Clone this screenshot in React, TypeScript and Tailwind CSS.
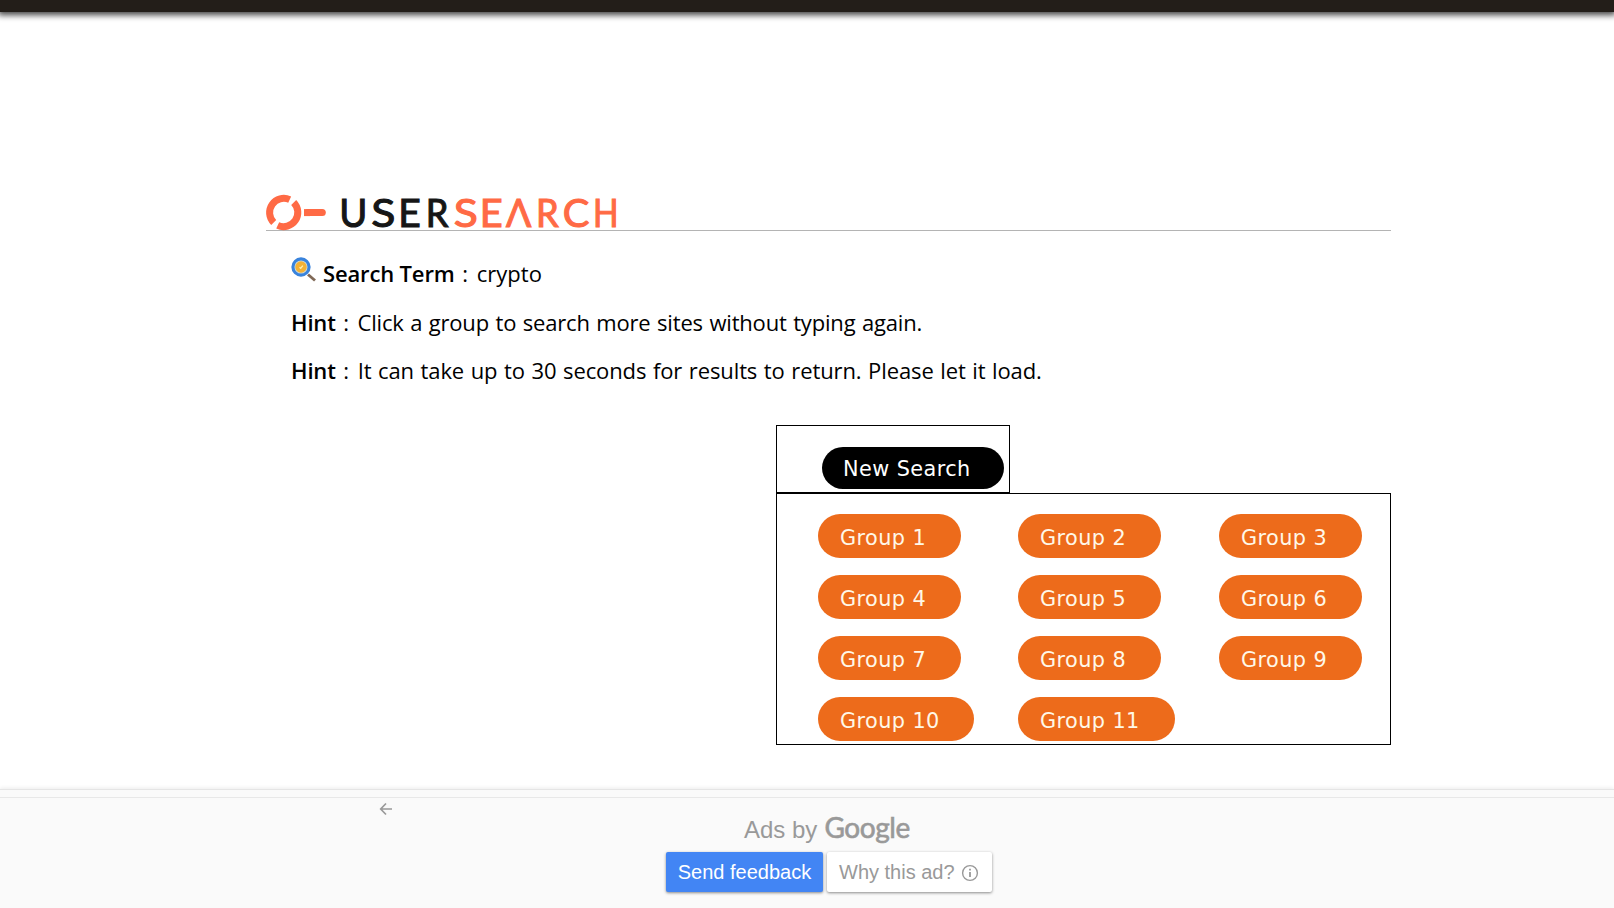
import React from "react";

const groups = Array.from({ length: 11 }, (_, i) => `Group ${i + 1}`);

// letter, centre x, horizontal stretch, colour
const letters: [string, number, number, string][] = [
  ["U", 87.2, 0.98, "#161616"],
  ["S", 117.3, 1.14, "#161616"],
  ["E", 143.5, 1, "#161616"],
  ["R", 171, 0.93, "#161616"],
  ["S", 199.7, 1.14, "#ff6a45"],
  ["E", 225.3, 1.02, "#ff6a45"],
  ["Λ", 252.7, 0.96, "#ff6a45"],
  ["R", 281.3, 0.93, "#ff6a45"],
  ["C", 310, 1.02, "#ff6a45"],
  ["H", 339.9, 0.86, "#ff6a45"],
];

function Logo() {
  return (
    <svg width="356" height="36" viewBox="0 0 356 36" className="block overflow-visible" role="img" aria-label="UserSearch">
      <g fill="none" stroke="#ff6a45" strokeWidth="7">
        <path d="M7.7 28.5A14.2 14.2 0 0 1 23.7 5.6" />
        <path d="M27.7 8.5A14.2 14.2 0 0 1 11.7 31.4" />
        <path d="M42 18.6H56.3" strokeLinecap="round" />
        <path d="M38 18.6H44" />
      </g>
      <g fontFamily="Lato, sans-serif" fontSize="39" textAnchor="middle" strokeWidth="1.1">
        {letters.map(([ch, x, sx, color]) => (
          <text key={x} transform={`translate(${x} 32.5) scale(${sx} 1)`} fill={color} stroke={color}>
            {ch}
          </text>
        ))}
      </g>
    </svg>
  );
}

function Magnifier() {
  return (
    <svg width="26" height="26" viewBox="0 0 26 26" className="block">
      <path d="M17 17.5L24 23.5" stroke="#806957" strokeWidth="2.9" />
      <circle cx="10" cy="10" r="8.1" fill="#c9d8d8" stroke="#3983dc" strokeWidth="3.1" />
      <circle cx="10" cy="10" r="5.7" fill="#f4b134" />
      <path d="M8.5 10.3l1.2 1L11.8 8.6" fill="none" stroke="#fff0b0" strokeWidth="1.3" />
    </svg>
  );
}

function Label({ children }: { children: string }) {
  return (
    <>
      <b className="font-semibold tracking-[-0.15px] [word-spacing:0px]">{children}</b>{" "}
      <span className="mr-[2px] ml-px">:</span>{" "}
    </>
  );
}

export default function App() {
  return (
    <div className="flex h-[908px] w-[1614px] flex-col overflow-hidden bg-white text-black">
      <header className="h-3 shrink-0 bg-[#231e19] shadow-[0_1px_6px_2px_rgba(0,0,0,0.75)]" />

      <main className="ml-[266px] flex h-[777px] w-[1125px] shrink-0 flex-col">
        <div className="mt-[182px] h-[37px] shrink-0 border-b border-[#b4b4b4]">
          <Logo />
        </div>

        <section className="ml-[25px] h-[194px] shrink-0 pt-[18px] font-['Open_Sans',sans-serif] text-[22px] leading-[48px] whitespace-nowrap [word-spacing:1px]">
          <div className="flex h-[49px]">
            <div className="w-8 pt-2"><Magnifier /></div>
            <p><Label>Search Term</Label>crypto</p>
          </div>
          <p className="tracking-[-0.18px]"><Label>Hint</Label>Click a group to search more sites without typing again.</p>
          <p className="tracking-[-0.11px]"><Label>Hint</Label>It can take up to 30 seconds for results to return. Please let it load.</p>
        </section>

        <section className="ml-[510px] flex flex-col font-['DejaVu_Sans',Verdana,sans-serif] text-[20.8px] tracking-[0.42px] [word-spacing:1px]">
          <div className="flex h-[68px] w-[234px] shrink-0 border border-black pt-[21px] pl-[45px]">
            <button className="h-[42px] w-[182px] rounded-full bg-black pt-[3px] pl-[21px] text-left text-white">New Search</button>
          </div>
          <div className="grid h-[252px] w-[615px] grid-cols-[200px_201px_150px] content-start gap-y-[17px] border border-black pt-5 pl-[41px]">
            {groups.map((name, i) => (
              <button key={name} className={`h-11 rounded-full bg-[#ed6b1b] pt-[5px] pl-[22px] text-left text-[#fff8e8] ${i === 10 ? "w-[157px]" : i === 9 ? "w-[156px]" : "w-[143px]"}`}>
                {name}
              </button>
            ))}
          </div>
        </section>
      </main>

      <footer className="flex h-[119px] shrink-0 flex-col border-t border-[#e5e5e5] bg-[#fafafa] font-['Liberation_Sans',Arial,sans-serif] text-[#999] shadow-[0_-1px_4px_rgba(0,0,0,0.08)]">
        <div className="h-2 shrink-0 border-b border-[#e8e8e8]" />
        <div className="flex h-[54px] shrink-0">
          <svg width="14" height="14" viewBox="0 0 14 14" className="mt-1 ml-[379px] shrink-0" fill="none" stroke="#999" strokeWidth="1.7">
            <path d="M13 7H2M7 1.5L1.7 7L7 12.5" />
          </svg>
          <div className="ml-[351px] flex h-12 items-baseline pt-[11px] text-2xl leading-[36px]">
            <span>Ads by</span>
            <span className="ml-[7px] font-['Lato',sans-serif] text-[28px] tracking-[-0.4px] [-webkit-text-stroke:0.6px_#999]">Google</span>
          </div>
        </div>
        <div className="ml-[666px] flex gap-1 text-xl">
          <button className="h-10 w-[157px] rounded-[2px] bg-[#4285f4] text-white shadow-[0_1px_3px_rgba(0,0,0,0.45)]">Send feedback</button>
          <button className="flex h-10 w-[165px] items-center rounded-[2px] bg-white pl-3 shadow-[0_1px_3px_rgba(0,0,0,0.45)]">
            Why this ad?
            <svg width="18" height="18" viewBox="0 0 18 18" className="mt-0.5 ml-1.5" fill="none" stroke="#999">
              <circle cx="9" cy="9" r="7.4" strokeWidth="1.4" />
              <path d="M9 8v5M9 4.8v1.8" strokeWidth="1.8" />
            </svg>
          </button>
        </div>
      </footer>
    </div>
  );
}
